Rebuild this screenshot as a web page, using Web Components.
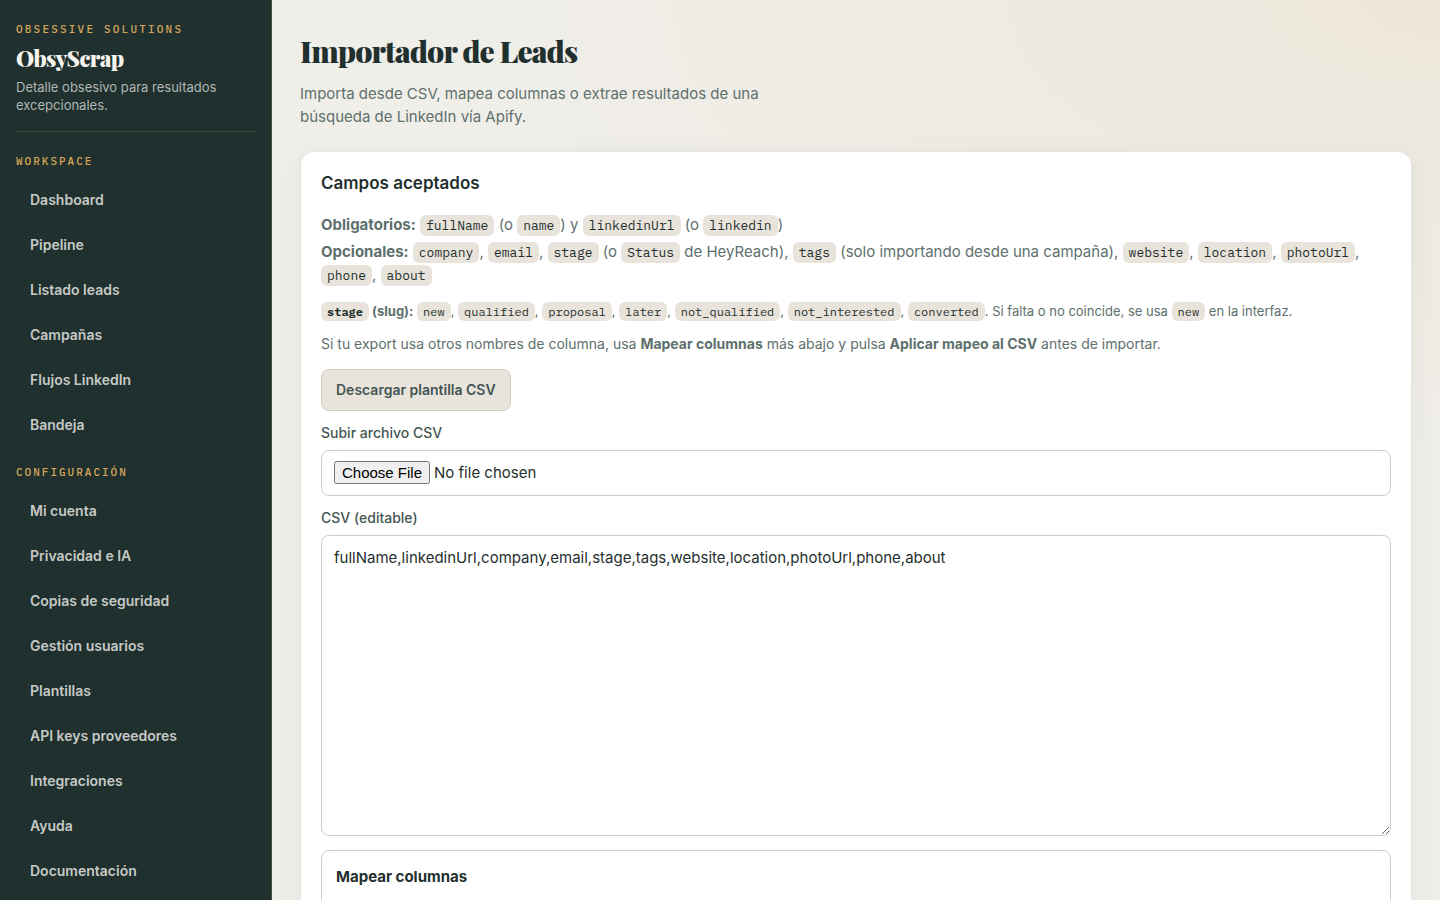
<!DOCTYPE html>
<html lang="es">
<head>
<meta charset="utf-8">
<meta name="viewport" content="width=device-width, initial-scale=1">
<title>ObsyScrap · Importador de Leads</title>
<style>
:root {
  --ink: #1f302e;
  --ink-soft: #5e706d;
  --ink-label: #445552;
  --sand: #e8e3db;
  --paper: #f0eee9;
  --gold: #d4a55a;
  --line: #cdcfce;
  --sans: Inter, "Open Sans", sans-serif;
  --serif: "Playfair Display", "Liberation Serif", serif;
  --mono: "IBM Plex Mono", "Liberation Mono", monospace;
}
html, body { height: 100%; }
body { margin: 0; font: 15px/23px var(--sans); color: var(--ink); background: var(--paper); }
</style>
</head>
<body>
<app-shell>
  <side-bar slot="side">
    <nav-group label="Workspace">
      <nav-item>Dashboard</nav-item>
      <nav-item>Pipeline</nav-item>
      <nav-item>Listado leads</nav-item>
      <nav-item>Campañas</nav-item>
      <nav-item>Flujos LinkedIn</nav-item>
      <nav-item>Bandeja</nav-item>
    </nav-group>
    <nav-group label="Configuración">
      <nav-item>Mi cuenta</nav-item>
      <nav-item>Privacidad e IA</nav-item>
      <nav-item>Copias de seguridad</nav-item>
      <nav-item>Gestión usuarios</nav-item>
      <nav-item>Plantillas</nav-item>
      <nav-item>API keys proveedores</nav-item>
      <nav-item>Integraciones</nav-item>
      <nav-item>Ayuda</nav-item>
      <nav-item>Documentación</nav-item>
    </nav-group>
  </side-bar>
  <page-header heading="Importador de Leads">Importa desde CSV, mapea columnas o extrae resultados de una búsqueda de LinkedIn vía Apify.</page-header>
  <panel-card heading="Campos aceptados">
    <field-help></field-help>
    <csv-form></csv-form>
    <map-columns></map-columns>
  </panel-card>
</app-shell>
<script>
function define(name, html) {
  const template = document.createElement('template');
  template.innerHTML = '<style>*{box-sizing:border-box}</style>' + html;
  customElements.define(name, class extends HTMLElement {
    constructor() {
      super();
      this.attachShadow({ mode: 'open' }).append(template.content.cloneNode(true));
    }
    connectedCallback() {
      for (const part of this.shadowRoot.querySelectorAll('[data-text]'))
        part.textContent = this.getAttribute(part.dataset.text) || '';
    }
  });
}

define('app-shell', `
<style>
:host { display: grid; grid-template-columns: 272px minmax(0, 1fr); height: 100vh; }
main { overflow: hidden; padding: 31px 28px 0;
  background: radial-gradient(ellipse 80% 50% at 100% 0%, rgba(212,165,90,.1), transparent), var(--paper); }
</style>
<slot name="side"></slot>
<main><slot></slot></main>`);

define('side-bar', `
<style>
:host { display: block; box-sizing: border-box; overflow: hidden; padding: 19px 16px; background: #1f302e; border-right: 1px solid #4a4f3b; }
header { padding-bottom: 17px; border-bottom: 1px solid #43493a; margin-bottom: 19px; }
.company { font: 500 11px/20px var(--mono); letter-spacing: .2em; text-transform: uppercase; color: var(--gold); }
.name { font: 900 22px/38px var(--serif); letter-spacing: -.03em; color: #f5f2ec; }
p { margin: 1px 0 0; font-size: 13px; line-height: 18px; color: #b2b7b4; }
</style>
<header>
  <div class="company">Obsessive Solutions</div>
  <div class="name">ObsyScrap</div>
  <p>Detalle obsesivo para resultados excepcionales.</p>
</header>
<nav><slot></slot></nav>`);

define('nav-group', `
<style>
:host { display: block; margin-bottom: 15px; }
h2 { margin: 0 0 6px; font: 500 11px/20px var(--mono); letter-spacing: 2px; text-transform: uppercase; color: var(--gold); }
</style>
<h2 data-text="label"></h2>
<slot></slot>`);

define('nav-item', `
<style>
:host { display: block; }
a { display: block; padding: 11px 14px; color: #c6c9c5; font-weight: 600; font-size: 14px; line-height: 23px; text-decoration: none; }
</style>
<a href="#"><slot></slot></a>`);

define('page-header', `
<style>
:host { display: block; margin-bottom: 23px; }
h1 { margin: 0 0 11px; font: 900 30px/40px var(--serif); letter-spacing: -.03em; }
p { margin: 0; max-width: 520px; color: var(--ink-soft); }
</style>
<h1 data-text="heading"></h1>
<p><slot></slot></p>`);

define('panel-card', `
<style>
:host { display: block; box-sizing: border-box; padding: 18px 20px; background: #fff; border: 1px solid #e4e6e3; border-radius: 14px; box-shadow: 0 8px 32px rgba(31,48,46,.06); }
h2 { margin: 0 0 17px; font-size: 17px; line-height: 26px; font-weight: 600; }
</style>
<h2 data-text="heading"></h2>
<slot></slot>`);

define('field-help', `
<style>
:host { display: block; color: var(--ink-soft); }
p { margin: 0 0 10px; }
.required { margin-bottom: 4px; }
.optional { margin-bottom: 14px; }
.slugs { font-size: 13px; line-height: 22px; }
.hint { margin-bottom: 14px; font-size: 14px; line-height: 23px; }
code { padding: 2px 6px; border-radius: 6px; background: var(--sand); color: var(--ink); font-family: var(--mono); font-size: 13px; line-height: 1; }
.slugs code { font-size: 12px; }
a { display: inline-block; padding: 8px 14px; border: 1px solid #d0cdc5; border-radius: 8px; background: var(--sand); color: var(--ink-label); font-size: 14px; font-weight: 600; line-height: 24px; text-decoration: none; vertical-align: top; }
</style>
<p class="required"><strong>Obligatorios:</strong> <code>fullName</code> (o <code>name</code>) y <code>linkedinUrl</code> (o <code>linkedin</code>)</p>
<p class="optional"><strong>Opcionales:</strong> <code>company</code>, <code>email</code>, <code>stage</code> (o <code>Status</code> de HeyReach), <code>tags</code> (solo importando desde una campaña), <code>website</code>, <code>location</code>, <code>photoUrl</code>, <code>phone</code>, <code>about</code></p>
<p class="slugs"><strong><code>stage</code> (slug):</strong> <code>new</code>, <code>qualified</code>, <code>proposal</code>, <code>later</code>, <code>not_qualified</code>, <code>not_interested</code>, <code>converted</code>. Si falta o no coincide, se usa <code>new</code> en la interfaz.</p>
<p class="hint">Si tu export usa otros nombres de columna, usa <strong>Mapear columnas</strong> más abajo y pulsa <strong>Aplicar mapeo al CSV</strong> antes de importar.</p>
<a href="#" download>Descargar plantilla CSV</a>`);

define('csv-form', `
<style>
:host { display: block; margin-bottom: 14px; }
label { display: block; margin: 12px 0 7px; color: var(--ink-label); font-size: 14px; line-height: 20px; font-weight: 500; }
input, textarea { display: block; width: 100%; padding: 10px 12px; border: 1px solid var(--line); border-radius: 8px; background: #fff; color: var(--ink); font: 15px/24px var(--sans); }
textarea { height: 301px; resize: vertical; }
</style>
<label for="file">Subir archivo CSV</label>
<input id="file" type="file" accept=".csv">
<label for="csv">CSV (editable)</label>
<textarea id="csv" spellcheck="false">fullName,linkedinUrl,company,email,stage,tags,website,location,photoUrl,phone,about</textarea>`);

define('map-columns', `
<style>
:host { display: block; box-sizing: border-box; min-height: 160px; padding: 14px; border: 1px solid var(--line); border-radius: 8px; }
h3 { margin: 0; font-size: 15px; line-height: 23px; font-weight: 700; }
</style>
<h3>Mapear columnas</h3>`);
</script>
</body>
</html>
